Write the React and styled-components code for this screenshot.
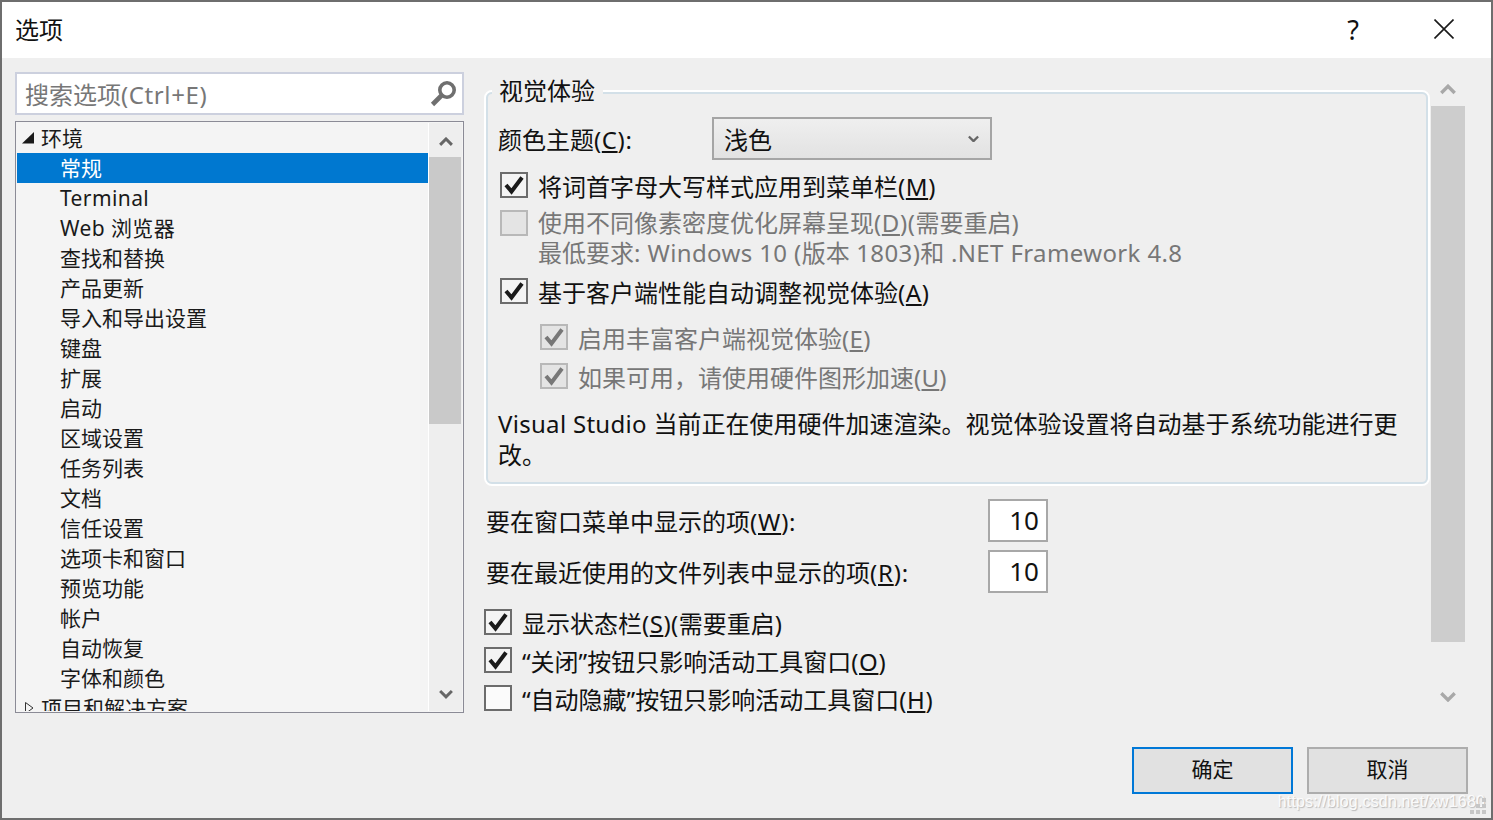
import React from 'react'
import styled, { createGlobalStyle } from 'styled-components'

const GlobalStyle = createGlobalStyle`
html, body {
  margin: 0;
  padding: 0;
  background: #efefef;
}
* {
  box-sizing: border-box;
}
`

const Window = styled.div`
position: relative;
width: 1493px;
height: 820px;
border: 2px solid #6e6e6e;
background: #efefef;
display: flex;
flex-direction: column;
overflow: hidden;
color: #111;
font-family: "Noto Sans", "Noto Sans CJK SC", sans-serif;
`

// latin runs come out a bit narrower than the reference, open them up
const Latin = styled.span`
letter-spacing: ${props => props.$s || 0.38}px;
`

const TitleBar = styled.div`
height: 56px;
flex: none;
background: #fff;
display: flex;
align-items: center;
padding-left: 13px;
`

const TitleText = styled.div`
font-size: 24px;
line-height: 54px;
flex: 1;
`

const HelpButton = styled.div`
width: 24px;
text-align: center;
font-size: 27px;
line-height: 54px;
margin-right: 69px;
`

const CloseButton = styled.div`
width: 20px;
height: 20px;
margin: 0 37px 3px 0;
display: flex;
`

const Body = styled.div`
flex: 1;
min-height: 0;
display: flex;
padding: 14px 0 0 13px;
`

const LeftColumn = styled.div`
width: 449px;
flex: none;
margin-right: 20px;
display: flex;
flex-direction: column;
gap: 6px;
`

const SearchBox = styled.div`
height: 43px;
background: #fff;
border: 2px solid #ccd0de;
display: flex;
align-items: center;
justify-content: space-between;
padding: 0 5px 0 8px;
font-size: 24px;
color: #777;
`

const Tree = styled.div`
height: 592px;
border: 1px solid #8b8b96;
background: #f4f4f4;
padding: 1px;
display: flex;
overflow: hidden;
`

const TreeRows = styled.div`
flex: 1;
min-width: 0;
overflow: hidden;
border-right: 1px solid #fff;
`

const TreeRow = styled.div`
height: 30px;
flex: none;
display: flex;
align-items: center;
font-size: 21px;
line-height: 30px;
white-space: nowrap;
padding-left: ${props => props.$top ? '4px' : '43px'};
background: ${props => props.$selected ? '#0078d0' : 'transparent'};
color: ${props => props.$selected ? '#fff' : '#1a1a1a'};
`

const Expander = styled.span`
width: 20px;
height: 14px;
display: flex;
flex: none;
`

const TreeScroll = styled.div`
width: 33px;
flex: none;
background: #eeeeee;
display: flex;
flex-direction: column;
align-items: center;
`

const TreeArrow = styled.div`
height: 34px;
flex: none;
display: flex;
align-items: center;
justify-content: center;
padding-top: ${props => props.$down ? '0' : '4px'};
padding-bottom: ${props => props.$down ? '0' : '0'};
`

const TreeThumb = styled.div`
width: 32px;
height: 267px;
margin-left: -1px;
flex: none;
background: #c9c9c9;
`

const TreeTrack = styled.div`
flex: 1;
`

const RightColumn = styled.div`
width: 946px;
flex: none;
padding-top: 18px;
overflow: hidden;
`

const Group = styled.div`
position: relative;
height: 396px;
border: 2px solid #fff;
border-radius: 8px;
`

const GroupInner = styled.div`
height: 392px;
border: 2px solid #d3e0e8;
border-radius: 6px;
padding: 23px 0 0 10px;
`

const Legend = styled.div`
position: absolute;
left: 6px;
top: -16px;
padding: 0 8px 0 7px;
background: #efefef;
font-size: 24px;
line-height: 30px;
`

const ThemeRow = styled.div`
height: 43px;
display: flex;
align-items: center;
font-size: 24px;
`

const ThemeLabel = styled.div`
width: 214px;
flex: none;
`

const ComboBox = styled.div`
width: 280px;
height: 43px;
border: 2px solid #a5a5a5;
background: linear-gradient(#efefef, #e2e2e2);
display: flex;
align-items: center;
justify-content: space-between;
padding: 0 11px 0 10px;
font-size: 24px;
`

const CheckRow = styled.div`
height: ${props => props.$h || 38}px;
margin-top: ${props => props.$mt || 0}px;
margin-left: ${props => props.$ml ?? 2}px;
display: flex;
align-items: center;
gap: ${props => props.$gap || 10}px;
font-size: 24px;
white-space: nowrap;
color: ${props => props.$disabled ? '#777' : '#111'};
`

const Box = styled.div`
width: 28px;
height: 26px;
flex: none;
display: flex;
align-items: center;
justify-content: center;
border: 2px solid ${props => props.$disabled ? '#b8b8b8' : '#6c6c6c'};
background: ${props => props.$disabled ? '#e4e4e4' : props.$plain ? '#fbfbfb' : '#f4f4f4'};
`

const DisabledBlock = styled.div`
margin: 4px 0 4px 2px;
display: flex;
gap: 10px;
color: #777;
font-size: 24px;
line-height: 30px;
white-space: nowrap;
`

const TopAligned = styled.div`
padding-top: 2px;
`

const Paragraph = styled.div`
margin-top: 13px;
width: 905px;
font-size: 24px;
line-height: 31px;
`

const NumberRow = styled.div`
height: 43px;
margin-top: ${props => props.$mt}px;
display: flex;
align-items: center;
padding-left: 2px;
font-size: 24px;
`

const NumberLabel = styled.div`
width: 502px;
flex: none;
`

const NumberInput = styled.div`
width: 60px;
height: 43px;
background: #fff;
border: 2px solid #a8a8a8;
text-align: right;
padding-right: 7px;
font-size: 26px;
line-height: 39px;
`

const CheckList = styled.div`
margin-top: 10px;
`

const OuterScroll = styled.div`
width: 34px;
flex: none;
margin-left: 1px;
height: 642px;
display: flex;
flex-direction: column;
`

const OuterArrow = styled.div`
height: ${props => props.$h}px;
flex: none;
display: flex;
justify-content: center;
align-items: ${props => props.$down ? 'flex-end' : 'flex-start'};
padding-top: ${props => props.$down ? '0' : '12px'};
padding-bottom: ${props => props.$down ? '12px' : '0'};
`

const OuterThumb = styled.div`
height: 536px;
flex: none;
background: #cdcdcd;
`

const Footer = styled.div`
flex: none;
display: flex;
justify-content: flex-end;
gap: 14px;
padding: 0 23px 24px 0;
`

const Button = styled.div`
width: 161px;
height: 47px;
display: flex;
align-items: center;
justify-content: center;
padding-bottom: 5px;
background: #e1e1e1;
font-size: 21px;
border: 2px solid ${props => props.$primary ? '#0078d7' : '#adadad'};
`

const Watermark = styled.div`
position: absolute;
right: 6px;
bottom: 6px;
font-family: "Liberation Sans", sans-serif;
font-size: 16px;
letter-spacing: 0.16px;
line-height: 20px;
color: rgba(255, 255, 255, 0.9);
text-shadow: 1px 1px 1px rgba(120, 120, 120, 0.45);
`

const Grip = styled.svg`
position: absolute;
right: 3px;
bottom: 3px;
`

const CheckMark = ({ color = '#1a1a1a' }) => (
  <svg width="22" height="20" viewBox="0 0 22 20">
    <path d="M3 10 L8.5 16.5 L19 2.5" fill="none" stroke={color} strokeWidth="4" />
  </svg>
)

const Chevron = ({ down, color = '#666', size = 14 }) => (
  <svg width={size} height={size * 0.7} viewBox="0 0 14 10">
    <path d={down ? 'M1 2 L7 8 L13 2' : 'M1 8 L7 2 L13 8'} fill="none" stroke={color} strokeWidth="3" />
  </svg>
)

const Check = ({ checked, disabled, plain }) => (
  <Box $disabled={disabled} $plain={plain}>
    {checked && <CheckMark color={disabled ? '#777' : '#1a1a1a'} />}
  </Box>
)

const treeItems = [
  '常规', 'Terminal', 'Web 浏览器', '查找和替换', '产品更新', '导入和导出设置', '键盘', '扩展', '启动',
  '区域设置', '任务列表', '文档', '信任设置', '选项卡和窗口', '预览功能', '帐户', '自动恢复', '字体和颜色',
]

const App = () => {
  return (
    <Window>
      <GlobalStyle />
      <TitleBar>
        <TitleText>选项</TitleText>
        <HelpButton>?</HelpButton>
        <CloseButton>
          <svg width="20" height="20" viewBox="0 0 20 20">
            <path d="M0.5 0.5 L19.5 19.5 M19.5 0.5 L0.5 19.5" stroke="#1a1a1a" strokeWidth="1.6" />
          </svg>
        </CloseButton>
      </TitleBar>

      <Body>
        <LeftColumn>
          <SearchBox>
            <span>搜索选项<Latin $s={0.6}>(Ctrl+E)</Latin></span>
            <svg width="27" height="27" viewBox="0 0 27 27">
              <circle cx="17" cy="10" r="7.2" fill="none" stroke="#6f6f6f" strokeWidth="3.6" />
              <path d="M11.5 15.5 L2.5 24.5" stroke="#6f6f6f" strokeWidth="4.6" />
            </svg>
          </SearchBox>
          <Tree>
            <TreeRows>
              <TreeRow $top>
                <Expander>
                  <svg width="15" height="14" viewBox="0 0 15 14">
                    <path d="M1 12.5 L13 12.5 L13 1 Z" fill="#1a1a1a" />
                  </svg>
                </Expander>
                环境
              </TreeRow>
              {treeItems.map((item, i) => (
                <TreeRow key={item} $selected={i === 0}>
                  {/[a-z]/i.test(item) ? <Latin $s={0.4}>{item}</Latin> : item}
                </TreeRow>
              ))}
              <TreeRow $top>
                <Expander>
                  <svg width="15" height="14" viewBox="0 0 15 14">
                    <path d="M4.5 1.5 L4.5 12.5 L12 7 Z" fill="none" stroke="#333" strokeWidth="1" />
                  </svg>
                </Expander>
                项目和解决方案
              </TreeRow>
            </TreeRows>
            <TreeScroll>
              <TreeArrow><Chevron /></TreeArrow>
              <TreeThumb />
              <TreeTrack />
              <TreeArrow $down><Chevron down /></TreeArrow>
            </TreeScroll>
          </Tree>
        </LeftColumn>

        <RightColumn>
          <Group>
            <Legend>视觉体验</Legend>
            <GroupInner>
              <ThemeRow>
                <ThemeLabel>颜色主题<Latin $s={0.6}>(<u>C</u>):</Latin></ThemeLabel>
                <ComboBox>
                  <span>浅色</span>
                  <Chevron down color="#666" size={11} />
                </ComboBox>
              </ThemeRow>
              <CheckRow $mt={6}>
                <Check checked />
                <span>将词首字母大写样式应用到菜单栏<Latin $s={0.6}>(<u>M</u>)</Latin></span>
              </CheckRow>
              <DisabledBlock>
                <TopAligned><Check disabled /></TopAligned>
                <div>
                  <div>使用不同像素密度优化屏幕呈现<Latin $s={0.6}>(<u>D</u>)(</Latin>需要重启<Latin $s={0.6}>)</Latin></div>
                  <div>最低要求<Latin>: Windows 10 (</Latin>版本<Latin> 1803)</Latin>和<Latin> .NET Framework 4.8</Latin></div>
                </div>
              </DisabledBlock>
              <CheckRow>
                <Check checked />
                <span>基于客户端性能自动调整视觉体验<Latin $s={0.6}>(<u>A</u>)</Latin></span>
              </CheckRow>
              <CheckRow $mt={8} $ml={42} $disabled>
                <Check checked disabled />
                <span>启用丰富客户端视觉体验<Latin $s={0.3}>(<u>E</u>)</Latin></span>
              </CheckRow>
              <CheckRow $mt={1} $ml={42} $disabled>
                <Check checked disabled />
                <span>如果可用，请使用硬件图形加速<Latin $s={0.3}>(<u>U</u>)</Latin></span>
              </CheckRow>
              <Paragraph>
                <Latin $s={0.3}>Visual Studio </Latin>当前正在使用硬件加速渲染。视觉体验设置将自动基于系统功能进行更改。
              </Paragraph>
            </GroupInner>
          </Group>
          <NumberRow $mt={13}>
            <NumberLabel>要在窗口菜单中显示的项<Latin $s={0.8}>(<u>W</u>):</Latin></NumberLabel>
            <NumberInput>10</NumberInput>
          </NumberRow>
          <NumberRow $mt={8}>
            <NumberLabel>要在最近使用的文件列表中显示的项<Latin $s={0.8}>(<u>R</u>):</Latin></NumberLabel>
            <NumberInput>10</NumberInput>
          </NumberRow>
          <CheckList>
            <CheckRow $ml={0}>
              <Check checked />
              <span>显示状态栏<Latin $s={0.5}>(<u>S</u>)(</Latin>需要重启<Latin $s={0.5}>)</Latin></span>
            </CheckRow>
            <CheckRow $ml={0}>
              <Check checked />
              <span>“关闭”按钮只影响活动工具窗口<Latin $s={0.6}>(<u>O</u>)</Latin></span>
            </CheckRow>
            <CheckRow $ml={0}>
              <Check plain />
              <span>“自动隐藏”按钮只影响活动工具窗口<Latin $s={0.6}>(<u>H</u>)</Latin></span>
            </CheckRow>
          </CheckList>
        </RightColumn>

        <OuterScroll>
          <OuterArrow $h={34}><Chevron color="#a8a8a8" size={16} /></OuterArrow>
          <OuterThumb />
          <OuterArrow $h={72} $down><Chevron down color="#a8a8a8" size={16} /></OuterArrow>
        </OuterScroll>
      </Body>

      <Footer>
        <Button $primary>确定</Button>
        <Button>取消</Button>
      </Footer>

      <Watermark>https://blog.csdn.net/xw1680</Watermark>
      <Grip width="18" height="18" viewBox="0 0 18 18">
        <path d="M12 1h4v4h-4z M6 7h4v4H6z M12 7h4v4h-4z M0 13h4v4H0z M6 13h4v4H6z M12 13h4v4h-4z" fill="#c6c6c6" />
      </Grip>
    </Window>
  )
}

export default App
